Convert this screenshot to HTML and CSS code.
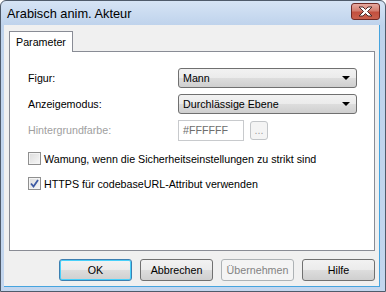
FILE: index.html
```html
<!DOCTYPE html>
<html lang="de">

<head>
    <meta charset="UTF-8">
    <title>Arabisch anim. Akteur</title>
    <link rel="stylesheet" href="styles.css">
</head>

<body>
    <div class="window">
        <div class="titleBar">
            <span class="titleText">Arabisch anim. Akteur</span>
            <span class="closeBtn">
                <svg width="17" height="11" viewBox="0 0 17 11">
                    <path d="M2 1 H6 L8.5 3.5 L11 1 H15 L10.5 5.5 L15 10 H11 L8.5 7.5 L6 10 H2 L6.5 5.5 Z"
                        fill="#ffffff" stroke="#4a2a2a" stroke-width="1" stroke-linejoin="round" />
                </svg>
            </span>
        </div>

        <div class="client">
            <div class="tabs">
                <span class="tab">Parameter</span>
            </div>

            <div class="panel">
                <div class="formGrid">
                    <span class="label">Figur:</span>
                    <span class="combo">Mann<i class="arrow"></i></span>

                    <span class="label">Anzeigemodus:</span>
                    <span class="combo">Durchlässige Ebene<i class="arrow"></i></span>

                    <span class="label disabled">Hintergrundfarbe:</span>
                    <span class="colorRow">
                        <span class="textBox">#FFFFFF</span>
                        <span class="dotsBtn">...</span>
                    </span>
                </div>

                <div class="checks">
                    <label class="check"><span class="box"></span>Wamung, wenn die Sicherheitseinstellungen zu strikt sind</label>
                    <label class="check"><span class="box checked">
                            <svg width="9" height="9" viewBox="0 0 9 9">
                                <path d="M1 4.5 L3.5 7.5 L8 1" fill="none" stroke="#3d5aa3" stroke-width="1.8" />
                            </svg>
                        </span>HTTPS für codebaseURL-Attribut verwenden</label>
                </div>
            </div>

            <div class="buttons">
                <span class="btn default">OK</span>
                <span class="btn">Abbrechen</span>
                <span class="btn off">Übernehmen</span>
                <span class="btn">Hilfe</span>
            </div>
        </div>
    </div>
</body>

</html>
```

FILE: styles.css
```css
* {
    box-sizing: border-box;
}

body {
    margin: 0;
    background-color: #ffffff;
    font-family: "Liberation Sans", Arial, sans-serif;
    font-size: 10.7px;
    color: #000000;
}

.window {
    width: 386px;
    height: 292px;
    border: 1px solid #4f5b6b;
    border-radius: 6px 6px 0 0;
    background: linear-gradient(#d6e4f5, #bfd3ec 24px, #c3d6ee);
    display: flex;
    flex-direction: column;
}

.titleBar {
    height: 24px;
    display: flex;
    align-items: center;
    justify-content: space-between;
    padding: 0 5px 0 6px;
}

.titleText {
    font-size: 12.8px;
    padding-top: 1px;
}

.closeBtn {
    width: 29px;
    height: 17px;
    margin-top: -4px;
    border: 1px solid #6e2a26;
    border-radius: 3px;
    background: linear-gradient(#e7a99f, #d37e70 45%, #c2503f 55%, #c9604d);
    display: flex;
    align-items: center;
    justify-content: center;
}

.client {
    flex: 1;
    margin: 0 5px 4px 3px;
    background-color: #f0f0f0;
    border-right: 1px solid #46a4df;
    border-bottom: 1px solid #46a4df;
    padding: 6px 4px 0 5px;
}

.tabs {
    display: flex;
}

.tab {
    width: 64px;
    height: 21px;
    border: 1px solid #898c95;
    border-bottom: none;
    background-color: #ffffff;
    padding: 4px 0 0 6px;
    position: relative;
    margin-bottom: -1px;
}

.panel {
    height: 200px;
    border: 1px solid #898c95;
    background-color: #ffffff;
    padding: 16px 0 0 18px;
}

.formGrid {
    display: grid;
    grid-template-columns: 150px 179px;
    grid-auto-rows: 20px;
    row-gap: 6px;
    align-items: center;
}

.label.disabled {
    color: #a0a0a0;
}

.combo {
    height: 20px;
    border: 1px solid #707070;
    border-radius: 3px;
    background: linear-gradient(#f2f2f2, #ebebeb 50%, #dddddd 51%, #cfcfcf);
    display: flex;
    align-items: center;
    justify-content: space-between;
    padding: 0 6px 0 4px;
}

.arrow {
    width: 0;
    height: 0;
    border-left: 4px solid transparent;
    border-right: 4px solid transparent;
    border-top: 4px solid #000000;
}

.colorRow {
    display: flex;
    gap: 6px;
    height: 21px;
}

.textBox {
    width: 66px;
    height: 21px;
    border: 1px solid #c8cacd;
    color: #6d6d6d;
    padding: 3px 0 0 4px;
}

.dotsBtn {
    width: 18px;
    height: 19px;
    margin-top: 1px;
    border: 1px solid #c2c5c8;
    border-radius: 3px;
    background-color: #f4f4f4;
    color: #a0a0a0;
    text-align: center;
    line-height: 17px;
}

.checks {
    display: flex;
    flex-direction: column;
    gap: 12px;
    margin-top: 12px;
}

.check {
    display: flex;
    align-items: center;
    gap: 3px;
}

.box {
    width: 13px;
    height: 13px;
    border: 1px solid #8f8f8f;
    background: linear-gradient(135deg, #dcdcdc, #f7f7f7);
    box-shadow: inset 0 0 0 1px #f4f4f4;
    display: flex;
    align-items: center;
    justify-content: center;
}

.buttons {
    display: flex;
    justify-content: flex-end;
    gap: 8px;
    margin-top: 8px;
}

.btn {
    width: 73px;
    height: 22px;
    border: 1px solid #707070;
    border-radius: 3px;
    background: linear-gradient(#f2f2f2, #ebebeb 50%, #dddddd 51%, #cfcfcf);
    display: flex;
    align-items: center;
    justify-content: center;
}

.btn.default {
    border-color: #3c7fb1;
    box-shadow: inset 0 0 0 1px #48d0fa;
}

.btn.off {
    border-color: #adb2b5;
    background: #f4f4f4;
    color: #838383;
}
```
